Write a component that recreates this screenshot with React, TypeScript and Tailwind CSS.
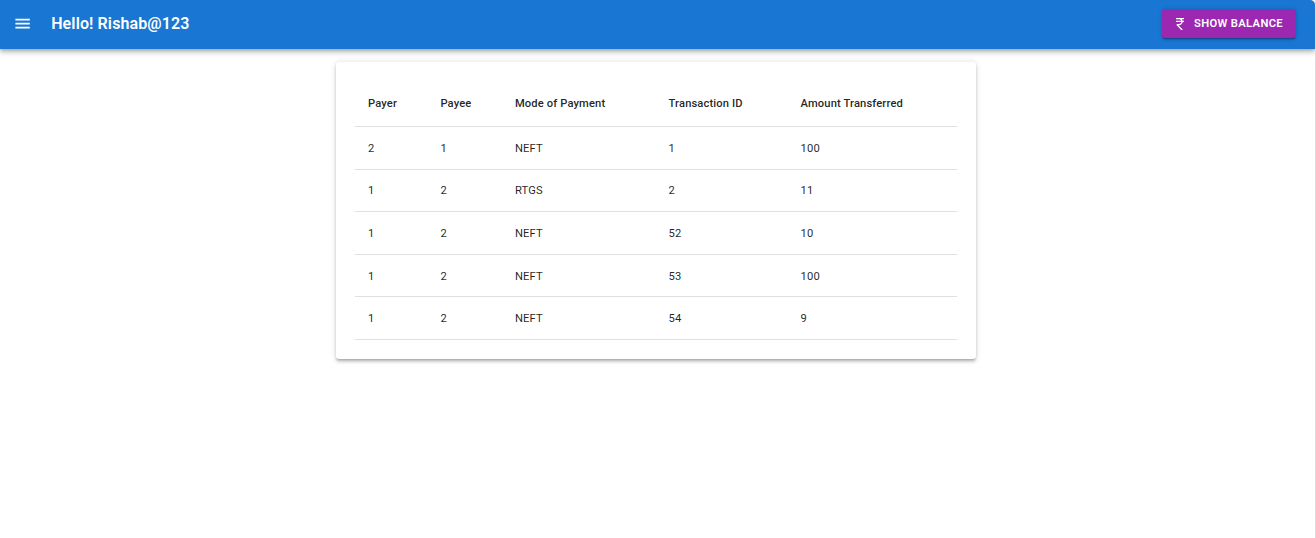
import React from "react";

const columns = ["Payer", "Payee", "Mode of Payment", "Transaction ID", "Amount Transferred"];

const rows = [
  ["2", "1", "NEFT", "1", "100"],
  ["1", "2", "RTGS", "2", "11"],
  ["1", "2", "NEFT", "52", "10"],
  ["1", "2", "NEFT", "53", "100"],
  ["1", "2", "NEFT", "54", "9"],
];

function MenuIcon() {
  return (
    <svg viewBox="0 0 24 24" className="size-[19.2px]" fill="currentColor">
      <path d="M3 18h18v-2H3v2zm0-5h18v-2H3v2zm0-7v2h18V6H3z" />
    </svg>
  );
}

function RupeeIcon() {
  return (
    <svg viewBox="0 0 24 24" className="size-4" fill="currentColor">
      <path d="M13.66 7c-.56-1.18-1.76-2-3.16-2H6V3h12v2h-3.26c.48.58.84 1.26 1.05 2H18v2h-2.02c-.25 2.8-2.61 5-5.48 5h-.73l6.73 7h-2.77L7 14v-2h3.5c1.76 0 3.22-1.3 3.46-3H6V7h7.66z" />
    </svg>
  );
}

function TopBar() {
  return (
    <header className="flex h-[49px] items-center rounded-tr-[5px] bg-[#1976d2] pr-[19px] pl-[12.8px] pb-[2px] text-white shadow-[0_1.6px_3.2px_-0.8px_rgba(0,0,0,0.2),0_3.2px_4px_0_rgba(0,0,0,0.14),0_0.8px_8px_0_rgba(0,0,0,0.12)]">
      <button aria-label="menu" className="mr-[19.2px] flex items-center">
        <MenuIcon />
      </button>
      <h1 className="text-[16px] leading-[26px] font-semibold tracking-[0.0075em]">Hello! Rishab@123</h1>
      <button className="ml-auto flex h-[29px] w-[134px] items-center rounded-[3.2px] bg-[#9c27b0] pl-[10px] text-[11.2px] leading-[19.6px] font-semibold tracking-[0.031em] whitespace-nowrap shadow-[0_2.4px_0.8px_-1.6px_rgba(0,0,0,0.2),0_1.6px_1.6px_0_rgba(0,0,0,0.14),0_0.8px_4px_0_rgba(0,0,0,0.12)]">
        <span className="mr-[6px]">
          <RupeeIcon />
        </span>
        SHOW BALANCE
      </button>
    </header>
  );
}

export default function App() {
  return (
    <div className="h-[538px] overflow-hidden border-r border-[#dcdcdc] bg-white font-['Roboto',sans-serif] text-[rgba(0,0,0,0.87)]">
      <TopBar />
      <main className="mx-auto mt-[13px] mr-[339px] ml-[336px] h-[297px] rounded-[3.2px] bg-white px-[19.2px] pt-[19.2px] shadow-[0_2.4px_2.4px_-1.6px_rgba(0,0,0,0.2),0_2.4px_3.2px_0_rgba(0,0,0,0.14),0_0.8px_6.4px_0_rgba(0,0,0,0.12)]">
        <table className="w-full table-fixed border-separate border-spacing-0 text-left text-[11.2px] tracking-[0.01071em]">
          <colgroup>
            <col className="w-[72.4px]" />
            <col className="w-[74.6px]" />
            <col className="w-[153.6px]" />
            <col className="w-[132px]" />
            <col />
          </colgroup>
          <thead>
            <tr>
              {columns.map((c) => (
                <th key={c} className="border-b border-[#e0e0e0] p-[12.8px] leading-[19.2px] font-medium whitespace-nowrap">
                  {c}
                </th>
              ))}
            </tr>
          </thead>
          <tbody>
            {rows.map((r, i) => (
              <tr key={i}>
                {r.map((v, j) => (
                  <td key={j} className="border-b border-[#e0e0e0] px-[12.8px] pt-[13.8px] pb-[11.8px] leading-[16px]">
                    {v}
                  </td>
                ))}
              </tr>
            ))}
          </tbody>
        </table>
      </main>
    </div>
  );
}
